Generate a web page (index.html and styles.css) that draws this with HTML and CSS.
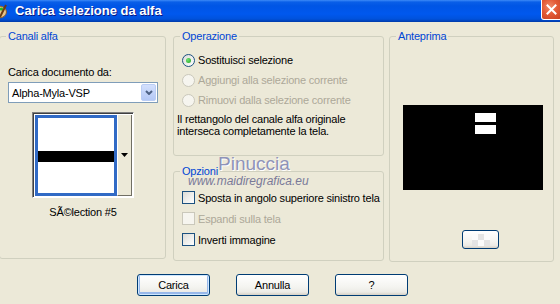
FILE: index.html
```html
<!DOCTYPE html>
<html lang="it">

<head>
    <meta charset="UTF-8">
    <meta name="viewport" content="width=device-width, initial-scale=1.0">
    <title>Carica selezione da alfa</title>
    <link rel="stylesheet" href="styles.css">
</head>

<body>
    <div class="window">
        <div class="titlebar">
            <div class="title-left">
                <svg class="app-icon" width="16" height="16" viewBox="0 0 16 16">
                    <ellipse cx="8" cy="9" rx="7.5" ry="6" fill="#e8c48a" stroke="#8a5a2a" stroke-width="1" />
                    <circle cx="4" cy="7" r="1.6" fill="#d22" />
                    <circle cx="7" cy="5.5" r="1.6" fill="#2a5fd8" />
                    <circle cx="10.5" cy="6" r="1.6" fill="#2b2" />
                    <circle cx="5" cy="11" r="1.6" fill="#f0d020" />
                    <path d="M9 14 L15 2" stroke="#6b3a12" stroke-width="2" />
                </svg>
                <span class="title">Carica selezione da alfa</span>
            </div>
            <div class="close-btn">
                <svg width="11" height="11" viewBox="0 0 11 11">
                    <path d="M1.5 1.5 L9.5 9.5 M9.5 1.5 L1.5 9.5" stroke="#fff" stroke-width="2" stroke-linecap="square" />
                </svg>
            </div>
        </div>

        <div class="panels">
            <fieldset class="group group-channels">
                <legend>Canali alfa</legend>
                <div class="field-label">Carica documento da:</div>
                <div class="select">
                    <span class="select-value">Alpha-Myla-VSP</span>
                    <span class="select-arrow">
                        <svg width="8" height="5" viewBox="0 0 8 5">
                            <polyline points="1,1 4,4 7,1" fill="none" stroke="#4d6185" stroke-width="2" />
                        </svg>
                    </span>
                </div>
                <div class="thumb-picker">
                    <div class="thumb">
                        <div class="thumb-bar"></div>
                    </div>
                    <div class="thumb-drop">
                        <svg width="7" height="4" viewBox="0 0 7 4">
                            <polygon points="0,0 7,0 3.5,4" fill="#000" />
                        </svg>
                    </div>
                </div>
                <div class="thumb-caption">SÃ©lection #5</div>
            </fieldset>

            <div class="middle">
                <fieldset class="group group-op">
                    <legend>Operazione</legend>
                    <div class="option-list op-list">
                        <div class="option-row">
                            <span class="radio"><span class="radio-dot"></span></span>
                            <span>Sostituisci selezione</span>
                        </div>
                        <div class="option-row disabled">
                            <span class="radio"></span>
                            <span>Aggiungi alla selezione corrente</span>
                        </div>
                        <div class="option-row disabled">
                            <span class="radio"></span>
                            <span>Rimuovi dalla selezione corrente</span>
                        </div>
                    </div>
                    <p class="op-note">Il rettangolo del canale alfa originale<br>interseca completamente la tela.</p>
                </fieldset>

                <fieldset class="group group-opts">
                    <legend>Opzioni</legend>
                    <div class="option-list opts-list">
                        <div class="option-row check-row">
                            <span class="checkbox"></span>
                            <span>Sposta in angolo superiore sinistro tela</span>
                        </div>
                        <div class="option-row check-row disabled">
                            <span class="checkbox"></span>
                            <span>Espandi sulla tela</span>
                        </div>
                        <div class="option-row check-row">
                            <span class="checkbox"></span>
                            <span>Inverti immagine</span>
                        </div>
                    </div>
                </fieldset>

                <div class="watermark-name">Pinuccia</div>
                <div class="watermark-url">www.maidiregrafica.eu</div>
            </div>

            <fieldset class="group group-preview">
                <legend>Anteprima</legend>
                <div class="preview">
                    <div class="preview-bar"></div>
                    <div class="preview-bar"></div>
                </div>
                <div class="xp-button checker-button">
                    <span class="checker"></span>
                </div>
            </fieldset>
        </div>

        <div class="buttons">
            <div class="xp-button dialog-button focused">Carica</div>
            <div class="xp-button dialog-button">Annulla</div>
            <div class="xp-button dialog-button">?</div>
        </div>
    </div>
</body>

</html>
```

FILE: styles.css
```css
* {
    box-sizing: border-box;
}

body {
    margin: 0;
    font-family: 'Liberation Sans', Arial, sans-serif;
    font-size: 11px;
    letter-spacing: -0.2px;
    color: #000;
}

.window {
    width: 560px;
    height: 304px;
    background-color: #ece9d8;
    overflow: hidden;
}

/* title bar */

.titlebar {
    height: 22px;
    display: flex;
    align-items: flex-start;
    justify-content: space-between;
    background: linear-gradient(to bottom, #3d8af7 0, #0a5fe8 2px, #0055e5 6px, #0058ee 14px, #0052dc 19px, #003aa8 22px);
}

.title-left {
    display: flex;
    align-items: center;
    height: 21px;
}

.app-icon {
    margin-left: -9px;
}

.title {
    margin-left: 8px;
    color: #fff;
    font-size: 13px;
    font-weight: bold;
    letter-spacing: 0;
    text-shadow: 1px 1px #0a1883;
}

.close-btn {
    width: 21px;
    height: 20px;
    margin-right: -2px;
    display: flex;
    align-items: center;
    justify-content: center;
    border: 1px solid #fff;
    border-top: 0;
    border-radius: 0 0 3px 3px;
    background: radial-gradient(circle at 40% 35%, #f08a68 0, #e35a36 45%, #c8401e 100%);
}

/* group boxes */

.panels {
    display: flex;
    align-items: flex-start;
    padding-top: 8px;
}

.group {
    margin: 0;
    padding: 0;
    min-width: 0;
    border: 1px solid #d0d0bf;
    border-radius: 3px;
}

.group legend {
    margin-left: 6px;
    padding: 0 2px;
    line-height: 13px;
    color: #0046d5;
}

.group-channels {
    width: 167px;
    height: 229px;
    margin-left: -1px;
    padding: 0 7px 0 8px;
}

.group-channels legend {
    margin-left: -2px;
}

.middle {
    position: relative;
    width: 211px;
    margin-left: 7px;
    display: flex;
    flex-direction: column;
    gap: 9px;
}

.group-op {
    height: 126px;
}

.group-opts {
    height: 96px;
}

.group-preview {
    width: 165px;
    height: 232px;
    margin-left: 5px;
}

/* alpha channels */

.field-label {
    margin-top: 23px;
    line-height: 13px;
}

.select {
    margin-top: 3px;
    height: 21px;
    display: flex;
    align-items: center;
    justify-content: space-between;
    border: 1px solid #7f9db9;
    background-color: #fff;
    padding: 1px 1px 1px 3px;
}

.select-arrow {
    width: 15px;
    height: 17px;
    display: flex;
    align-items: center;
    justify-content: center;
    border: 1px solid #bacdf5;
    border-radius: 2px;
    background: linear-gradient(to bottom, #d3e0fd, #b4c8f6);
}

.thumb-picker {
    margin: 9px auto 0;
    width: 102px;
    height: 86px;
    display: flex;
    border-top: 1px solid #808080;
    border-left: 1px solid #808080;
    border-right: 1px solid #fff;
    border-bottom: 1px solid #fff;
    box-shadow: inset 1px 1px #404040;
    background-color: #fff;
    padding: 2px 1px 1px 2px;
}

.thumb {
    width: 82px;
    border: 3px solid #316ac5;
    background-color: #fff;
    padding-top: 33px;
}

.thumb-bar {
    height: 11px;
    background-color: #000;
}

.thumb-drop {
    flex: 1;
    display: flex;
    align-items: center;
    justify-content: center;
    background-color: #ece9d8;
    border-left: 1px solid #fff;
    border-right: 1px solid #716f64;
    border-bottom: 1px solid #716f64;
}

.thumb-caption {
    margin-top: 8px;
    line-height: 13px;
    text-align: center;
}

/* radios & checkboxes */

.option-list {
    padding-left: 8px;
}

.op-list {
    margin-top: 7px;
}

.opts-list {
    margin-top: 9px;
}

.option-row {
    height: 20px;
    display: flex;
    align-items: center;
    gap: 3px;
}

.check-row {
    height: 21px;
}

.option-row.disabled {
    color: #aca899;
}

.radio {
    width: 13px;
    height: 13px;
    border-radius: 50%;
    border: 1px solid #1c5180;
    background: linear-gradient(135deg, #dcdcd7, #fff);
    display: flex;
    align-items: center;
    justify-content: center;
}

.radio-dot {
    width: 5px;
    height: 5px;
    border-radius: 50%;
    background: radial-gradient(circle at 35% 35%, #6ee36e, #21a121);
}

.checkbox {
    width: 13px;
    height: 13px;
    border: 1px solid #1c5180;
    background: linear-gradient(135deg, #dcdcd7, #fff);
}

.disabled .radio,
.disabled .checkbox {
    border-color: #cac8bb;
    background: #f6f5ef;
}

.op-note {
    margin: 3px 0 0 3px;
    line-height: 12px;
}

/* watermark */

.watermark-name {
    position: absolute;
    left: 45px;
    top: 124px;
    font-size: 19px;
    line-height: 19px;
    letter-spacing: 0;
    color: #8f93b8;
    text-shadow: 1px 1px #fff;
}

.watermark-url {
    position: absolute;
    left: 15px;
    top: 145px;
    font-size: 12px;
    line-height: 12px;
    font-style: italic;
    letter-spacing: 0;
    color: #7a7a98;
}

/* preview */

.preview {
    margin: 62px 0 0 13px;
    width: 140px;
    height: 85px;
    background-color: #000;
    display: flex;
    flex-direction: column;
    gap: 3px;
    padding: 8px 0 0 72px;
}

.preview-bar {
    width: 21px;
    height: 9px;
    background-color: #fff;
}

/* buttons */

.xp-button {
    display: flex;
    align-items: center;
    justify-content: center;
    border: 1px solid #003c74;
    border-radius: 3px;
    background: linear-gradient(to bottom, #ffffff 0, #f4f4f0 60%, #ecebe6 85%, #d6d0c5 100%);
}

.checker-button {
    margin: 40px 0 0 72px;
    width: 37px;
    height: 19px;
}

.checker {
    width: 18px;
    height: 12px;
    background-color: #fbfbfb;
    background-image: conic-gradient(#e4e4e4 25%, transparent 25% 50%, #e4e4e4 50% 75%, transparent 75%);
    background-size: 12px 12px;
}

.buttons {
    display: flex;
    gap: 26px;
    padding: 12px 0 0 137px;
}

.dialog-button {
    width: 73px;
    height: 22px;
}

.dialog-button.focused {
    box-shadow: inset 0 0 0 1px #cee7ff, inset 0 -1px 0 2px #98b8ea;
}
```
